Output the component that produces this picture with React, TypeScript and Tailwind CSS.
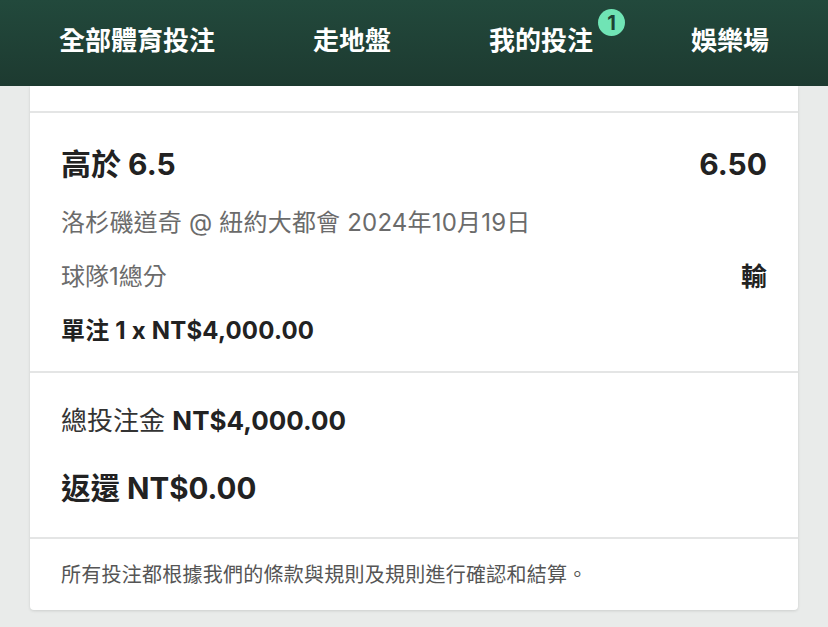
import React from "react"

const font = { fontFamily: 'Inter, "Noto Sans CJK TC", sans-serif' }

const tabs = ["全部體育投注", "走地盤", "我的投注", "娛樂場"]

export default function App() {
  return (
    <div style={font} className="w-[828px] h-[627px] overflow-hidden bg-[#e9ebea] flex flex-col">
      <header className="h-[86px] shrink-0 bg-gradient-to-b from-[#22493c] to-[#1d3a30] flex items-center justify-between px-[59px] pb-[4px]">
        {tabs.map((t) => (
          <span key={t} className="relative text-[26px] leading-[36px] font-semibold text-white">
            {t}
            {t === "我的投注" && (
              <span className="absolute -top-[14px] -right-[32px] w-[27px] h-[27px] rounded-full bg-[#70e4b5] text-[#1d4234] text-[20px] font-bold flex items-center justify-center leading-none">
                1
              </span>
            )}
          </span>
        ))}
      </header>

      <div className="mx-[30px] bg-white rounded-b-[4px] shadow-[0_1px_3px_rgba(0,0,0,0.12)] flex flex-col">
        <div className="h-[27px] border-b-2 border-[#e4e5e5]" />

        <section className="px-[31px] pt-[30px] pb-[24px] border-b-2 border-[#e4e5e5] flex flex-col gap-[22px]">
          <div className="flex justify-between items-center text-[30px] leading-[42px] font-bold text-[#222]">
            <span>高於 6.5</span>
            <span>6.50</span>
          </div>
          <div className="text-[24px] leading-[32px] tracking-[0.2px] text-[#6b6b6b]">
            洛杉磯道奇 @ 紐約大都會 2024年10月19日
          </div>
          <div className="flex justify-between items-center text-[24px] leading-[32px]">
            <span className="text-[#6b6b6b]">球隊1總分</span>
            <span className="text-[26px] font-bold text-[#222]">輸</span>
          </div>
          <div className="text-[24px] leading-[32px] tracking-[0.2px] font-bold text-[#222]">單注 1 x NT$4,000.00</div>
        </section>

        <section className="px-[31px] pt-[30px] pb-[29px] border-b-2 border-[#e4e5e5] flex flex-col gap-[29px]">
          <div className="text-[26px] leading-[36px] text-[#333]">
            總投注金 <span className="font-bold text-[#222]">NT$4,000.00</span>
          </div>
          <div className="text-[29.5px] leading-[40px] font-bold text-[#222]">返還 NT$0.00</div>
        </section>

        <footer className="px-[31px] h-[71px] flex items-center text-[20px] tracking-[0.25px] text-[#555]">
          所有投注都根據我們的條款與規則及規則進行確認和結算。
        </footer>
      </div>
    </div>
  )
}
